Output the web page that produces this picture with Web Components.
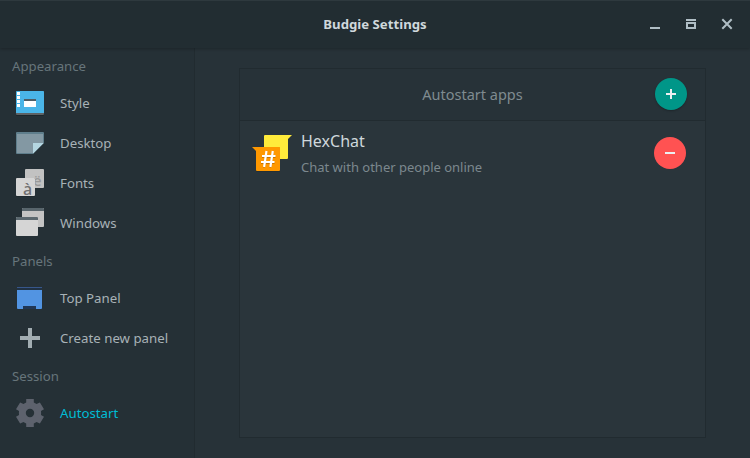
<!DOCTYPE html>
<html lang="en">
<head>
<meta charset="utf-8">
<title>Budgie Settings</title>
<style>
html,body{margin:0;height:100%;overflow:hidden;background:#263238}
body{font-family:"Noto Sans","Open Sans",sans-serif;font-size:13.33px}
</style>
</head>
<body>
<settings-window></settings-window>
<script>
const icons = {
  style: `<rect x="1" y="26" width="28" height="2" rx="1" fill="#1c262b"/><rect x="1" y="3" width="28" height="24" rx="1" fill="#5d6164"/><path d="M1 25V4q0-1 1-1h26q1 0 1 1v21z" fill="#4ab5e8"/><path d="M2 4h3v3H2zM2 8h3v3H2zM2 12h3v3H2zM2 16h3v3H2z" fill="#fff"/><path d="M9 13h12v6H9z" fill="#fff"/><path d="M9 11h12v2H9z" fill="#4f5d65"/>`,
  desktop: `<rect x="1" y="4" width="28" height="22" rx="1" fill="#5f7e8c"/><path d="M2 6h26v9l-10 10H2z" fill="#8398a3"/><path d="M18 26V15h11z" fill="#b4d6e1"/><path d="M18 26L29 15v11z" fill="#253036"/>`,
  fonts: `<rect x="10" y="1" width="19" height="19" rx="1" fill="#c2c2c2"/><text x="18" y="17.5" font-size="15" font-weight="500" fill="#999">ë</text><rect x="1" y="10" width="19" height="19" rx="1" fill="#192328" opacity=".5"/><rect x="1" y="10" width="19" height="18" rx="1" fill="#d5d5d5"/><text x="8" y="27" font-size="16" font-weight="500" fill="#707070">à</text>`,
  windows: `<rect x="7" y="0" width="22" height="19" rx="1" fill="#c4c4c4"/><path d="M7 3V1q0-1 1-1h20q1 0 1 1v2z" fill="#58656c"/><rect x="1" y="9" width="22" height="19" rx="1" fill="#d5d5d5"/><path d="M1 12v-2q0-1 1-1h20q1 0 1 1v2z" fill="#5b686f"/>`,
  panel: `<path d="M2 4h25v22H2z" fill="#203143"/><path d="M2 4h25v1H2z" fill="#37568a"/><path d="M2 7h25v18q0 1-1 1h-5v-3H8v3H3q-1 0-1-1z" fill="#5294e2"/><path d="M8 23h13v3H8z" fill="#203654"/>`,
  plus: `<path d="M13 5h4v8h8v4h-8v8h-4v-8H5v-4h8z" fill="#a2adb2"/>`,
  gear: `<path fill="#5d626d" fill-rule="evenodd" d="M11.2 1h7.6v3.6q1.5.6 2.7 1.5l3.4-1.7 4.1 6.8-3 1.9q.2 1.9 0 3.8l3 1.9-4.1 6.8-3.4-1.7q-1.2.9-2.7 1.5V29h-7.6v-3.6q-1.5-.6-2.7-1.5l-3.4 1.7L1 18.8l3-1.9q-.2-1.9 0-3.8l-3-1.9 4.1-6.8 3.4 1.7q1.2-.9 2.7-1.5zM15 10.8a4.2 4.2 0 1 0 0 8.4 4.2 4.2 0 1 0 0-8.4z"/>`
};
function define(name, render){
  customElements.define(name, class extends HTMLElement{
    connectedCallback(){
      if(this.shadowRoot) return;
      this.attachShadow({mode:'open'}).innerHTML = render(this);
    }
  });
}
define('title-bar', () => `<style>
:host{display:grid;grid-template-columns:1fr auto 1fr;align-items:center;height:48px;box-sizing:border-box;background:#222d32;border-top:1px solid #2e393e;color:#cfd8dc;box-shadow:0 1px 3px rgba(0,0,0,.25);position:relative}
b{grid-column:2;font-weight:700;font-size:13.2px;padding-bottom:2px}
div{display:flex;justify-content:flex-end;gap:26px;padding:0 18px 2px 0}svg{display:block;width:10px;height:10px}
</style><b><slot></slot></b><div>
<svg viewBox="0 0 10 10"><path d="M0 8h10v2H0z" fill="#b0bec5"/></svg>
<svg viewBox="0 0 10 10"><path fill-rule="evenodd" d="M0 0h10v2H0zM0 3h10v7H0zm2 2v3h6V5z" fill="#b0bec5"/></svg>
<svg viewBox="0 0 10 10" overflow="visible"><path d="M.3 .3l9.4 9.4M9.7 .3L.3 9.7" stroke="#b0bec5" stroke-width="2"/></svg></div>`);
define('nav-heading', () => `<style>:host{display:flex;align-items:center;height:35px;padding-left:12px;color:#67757b;font-size:13.2px}</style><slot></slot>`);
define('nav-item', el => `<style>
:host{display:flex;align-items:center;height:40px;padding-left:15px;gap:15px;color:#a8b2b7;font-size:13.25px}
:host([active]){color:#00bcd4}
svg{width:30px;height:30px;flex:none;overflow:visible;font-family:"Noto Sans",sans-serif}</style><svg viewBox="0 0 30 30">${icons[el.getAttribute('icon')]}</svg><slot></slot>`);
define('side-bar', () => `<style>:host{display:block;width:194px;flex:none;background:#253036;border-right:1px solid #212b30}</style><slot></slot>`);
define('round-button', el => `<style>
:host{display:grid;place-items:center;width:32px;height:32px;border-radius:50%;background:#009688;box-shadow:0 1px 2px rgba(0,0,0,.25)}
:host([kind=remove]){background:#ff5252;box-shadow:none}svg{width:10px;height:10px}</style>
<svg viewBox="0 0 10 10"><path fill="#eceff1" d="${el.getAttribute('kind')==='remove'?'M0 4h10v2H0z':'M4 0h2v4h4v2H6v4H4V6H0V4h4z'}"/></svg>`);
define('app-row', () => `<style>
:host{display:flex;align-items:center;height:64px;padding:0 19px 0 12px}
svg{width:40px;height:40px;flex:none}
div{flex:1;padding-left:9px}
.n{display:block;font-size:16px;line-height:24px;color:#cfd8dc}
.d{display:block;font-size:13px;line-height:20px;margin-top:4px;color:#7c888e}
</style><svg viewBox="0 0 40 40">
<path d="M12 3q0-1 1-1h27l-4 4v19q0 1-1 1H13q-1 0-1-1z" fill="#ffeb3b"/>
<path d="M0 14h27q1 0 1 1v23q0 1-1 1H5q-1 0-1-1V18z" fill="#1b2529" opacity=".35"/>
<path d="M0 14h27q1 0 1 1v22q0 1-1 1H5q-1 0-1-1V18z" fill="#ff9800"/>
<path d="M14.5 18.7l-2.4 16M20.8 18.7l-2.4 16M10 24h13.5M9 30h13.5" stroke="#c87400" stroke-width="2" fill="none"/>
<path d="M14.5 18l-2.4 16M20.8 18l-2.4 16M10 23h13.5M9 29h13.5" stroke="#fff" stroke-width="2.2" fill="none"/></svg>
<div><span class="n"><slot name="name"></slot></span><span class="d"><slot name="description"></slot></span></div><round-button kind="remove"></round-button>`);
define('autostart-list', () => `<style>
:host{display:block;box-sizing:border-box;width:467px;height:370px;margin:20px 0 0 44px;border:1px solid #212b30;background:#2a353b}
header{display:grid;box-sizing:border-box;grid-template-columns:1fr auto 1fr;align-items:center;height:52px;border-bottom:1px solid #212b30;background:#273238;color:#7f8b90;font-size:14.5px;padding:0 18px 2px}
h2{font:inherit;margin:0;grid-column:2}round-button{justify-self:end}
</style><header><h2><slot name="title"></slot></h2><round-button kind="add"></round-button></header><slot></slot>`);
define('settings-window', () => `<style>
:host{display:flex;flex-direction:column;height:458px;background:#273238}
main{display:flex;flex:1}
</style><title-bar>Budgie Settings</title-bar><main><side-bar>
<nav-heading>Appearance</nav-heading>
<nav-item icon="style">Style</nav-item><nav-item icon="desktop">Desktop</nav-item><nav-item icon="fonts">Fonts</nav-item><nav-item icon="windows">Windows</nav-item>
<nav-heading>Panels</nav-heading>
<nav-item icon="panel">Top Panel</nav-item><nav-item icon="plus">Create new panel</nav-item>
<nav-heading>Session</nav-heading><nav-item icon="gear" active>Autostart</nav-item>
</side-bar><autostart-list><span slot="title">Autostart apps</span>
<app-row><span slot="name">HexChat</span><span slot="description">Chat with other people online</span></app-row></autostart-list></main>`);
</script>
</body>
</html>
